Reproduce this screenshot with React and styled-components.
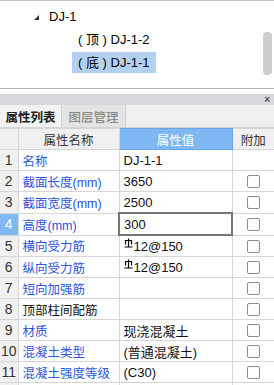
import styled, { createGlobalStyle } from 'styled-components'

const GlobalStyle = createGlobalStyle`
  body {
    margin: 0;
    background: #fff;
    font-family: "Liberation Sans", "Noto Sans CJK SC", sans-serif;
  }
`

const rows = [
  { name: '名称', value: 'DJ-1-1', noCheck: true },
  { name: '截面长度(mm)', value: '3650' },
  { name: '截面宽度(mm)', value: '2500' },
  { name: '高度(mm)', value: '300', active: true },
  { name: '横向受力筋', value: '12@150', bar: true },
  { name: '纵向受力筋', value: '12@150', bar: true },
  { name: '短向加强筋', value: '' },
  { name: '顶部柱间配筋', value: '', plain: true },
  { name: '材质', value: '现浇混凝土' },
  { name: '混凝土类型', value: '(普通混凝土)' },
  { name: '混凝土强度等级', value: '(C30)' },
  { name: '', value: '', noCheck: true }
]

const BarIcon = () => (
  <svg width='9' height='11' viewBox='0 0 9 11' style={{ marginRight: 1, verticalAlign: '2px' }}>
    <path d='M1.5 6.5 V2.5 H7.5 V6.5 M4.5 0.5 V9 M0.5 9 H8.5' stroke='#000' strokeWidth='1.2' fill='none' />
  </svg>
)

export default function App () {
  return (
    <Page>
      <GlobalStyle />
      <TreePanel>
        <TreeRow indent={34}>
          <Arrow />
          <span>DJ-1</span>
        </TreeRow>
        <TreeRow indent={72}>
          <TreeLabel>( 顶 ) DJ-1-2</TreeLabel>
        </TreeRow>
        <TreeRow indent={72}>
          <TreeLabel selected>( 底 ) DJ-1-1</TreeLabel>
        </TreeRow>
        <ScrollThumb />
      </TreePanel>
      <TitleBar>
        <Close>×</Close>
      </TitleBar>
      <TabRow>
        <Tab active>属性列表</Tab>
        <Tab>图层管理</Tab>
      </TabRow>
      <Table>
        <colgroup>
          <col style={{ width: 18 }} />
          <col style={{ width: 101 }} />
          <col style={{ width: 113 }} />
          <col style={{ width: 42 }} />
        </colgroup>
        <thead>
          <tr>
            <HeadCell />
            <HeadCell>属性名称</HeadCell>
            <HeadCell selected>属性值</HeadCell>
            <HeadCell>附加</HeadCell>
          </tr>
        </thead>
        <tbody>
          {rows.map((row, i) => (
            <tr key={i}>
              <NumCell active={row.active}>{row.name ? i + 1 : ''}</NumCell>
              <NameCell plain={row.plain}>{row.name}</NameCell>
              <ValueCell active={row.active}>
                {row.bar && <BarIcon />}
                {row.value}
              </ValueCell>
              <CheckCell>{!row.noCheck && <Check />}</CheckCell>
            </tr>
          ))}
        </tbody>
      </Table>
    </Page>
  )
}

const Page = styled.div`
  width: 274px;
  height: 385px;
  overflow: hidden;
  background: #fff;
`

const TreePanel = styled.div`
  position: relative;
  border-top: 1px solid #c6c6c6;
  border-bottom: 1px solid #b4b4b4;
  padding-top: 4px;
  height: 83px;
  color: #000;
`

const TreeRow = styled.div`
  display: flex;
  align-items: center;
  height: 23px;
  padding-left: ${props => props.indent}px;
  gap: 10px;
  font-size: 13px;
`

const Arrow = styled.span`
  width: 0;
  height: 0;
  border-left: 5px solid transparent;
  border-bottom: 5px solid #333;
  margin-top: 2px;
`

const TreeLabel = styled.span`
  display: inline-block;
  padding: 2px 6px;
  line-height: 17px;
  background: ${props => props.selected ? '#b4d0ef' : 'transparent'};
`

const ScrollThumb = styled.div`
  position: absolute;
  right: 2px;
  top: 31px;
  width: 9px;
  height: 43px;
  border-radius: 4px;
  background: #cdcdcd;
`

const TitleBar = styled.div`
  margin-top: 5px;
  height: 11px;
  background: #d6d7db;
  display: flex;
  justify-content: flex-end;
  align-items: center;
  padding-right: 4px;
`

const Close = styled.span`
  font-size: 10px;
  line-height: 10px;
  color: #555;
  font-weight: bold;
`

const TabRow = styled.div`
  display: flex;
  height: 22px;
  background: #efefef;
  border-bottom: 1px solid #d4d4d4;
`

const Tab = styled.div`
  display: flex;
  align-items: center;
  justify-content: center;
  width: ${props => props.active ? '62px' : '64px'};
  font-family: "Noto Sans CJK SC", sans-serif;
  font-size: 12.5px;
  font-weight: ${props => props.active ? 700 : 500};
  color: ${props => props.active ? '#222' : '#8a8a8a'};
  background: ${props => props.active ? '#f2f2f2' : '#e4e4e4'};
  border-right: 1px solid #d0d0d0;
  box-sizing: border-box;
`

const Table = styled.table`
  width: 274px;
  table-layout: fixed;
  border-collapse: collapse;
  font-size: 13px;

  td, th {
    height: 20px;
    padding: 0;
    border: 1px solid #d6d6d6;
    white-space: nowrap;
    overflow: hidden;
  }
  tr > :first-child { border-left: none; }
  tr > :last-child { border-right: none; }
`

const HeadCell = styled.th`
  font-weight: normal;
  font-family: "Noto Sans CJK SC", sans-serif;
  font-size: 12.5px;
  text-align: center;
  color: ${props => props.selected ? '#fff' : '#333'};
  background: ${props => props.selected ? '#80b8f3' : '#f0f0f0'};
  && { border-color: ${props => props.selected ? '#6aa6e6' : '#d6d6d6'}; }
`

const NumCell = styled.td`
  text-align: center;
  font-size: 14px;
  color: ${props => props.active ? '#fff' : '#333'};
  background: ${props => props.active ? '#80b8f3' : '#f0f0f0'};
`

const NameCell = styled.td`
  padding-left: 4px !important;
  font-size: 12.5px;
  color: ${props => props.plain ? '#111' : '#2b55e0'};
`

const ValueCell = styled.td`
  padding-left: 4px !important;
  color: #111;
  && { ${props => props.active && 'border: 2px solid #757575;'} }
`

const CheckCell = styled.td`
  text-align: center;
`

const Check = styled.span`
  display: inline-block;
  width: 11px;
  height: 11px;
  margin-top: 4px;
  border: 1px solid #8c8c8c;
  border-radius: 2px;
  background: #fff;
`
